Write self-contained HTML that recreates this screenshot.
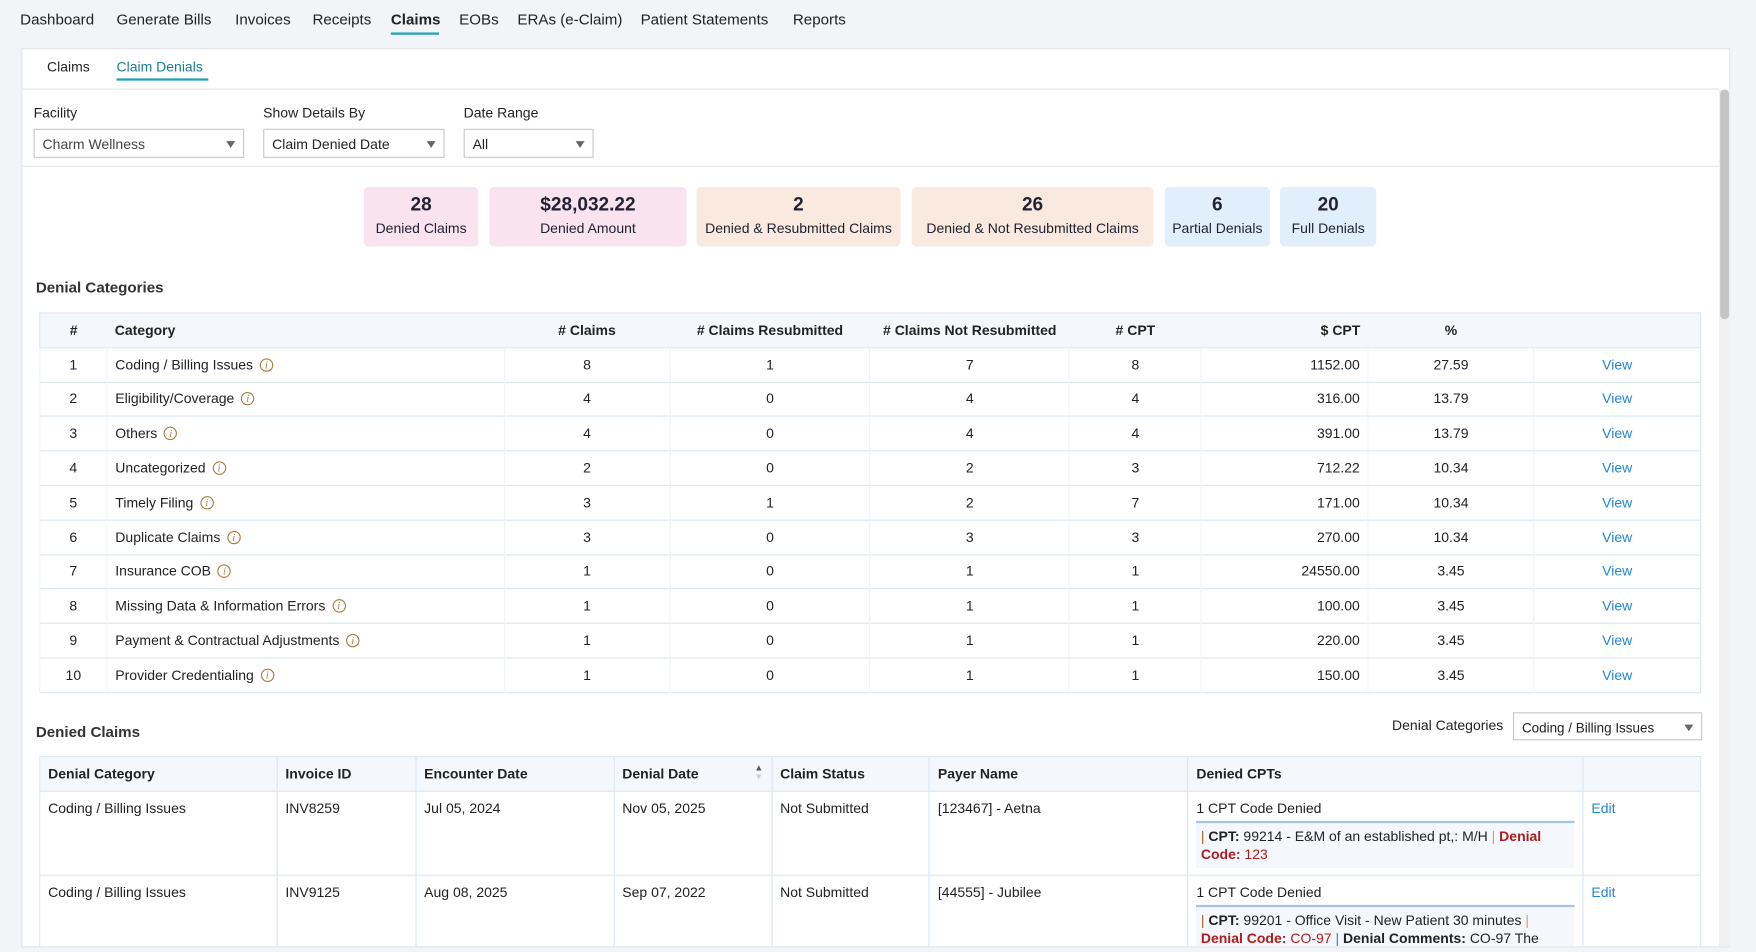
<!DOCTYPE html>
<html><head><meta charset="utf-8"><style>
*{box-sizing:border-box;margin:0;padding:0}
html,body{width:1756px;height:952px;overflow:hidden;background:#f3f4f8}
#s{position:absolute;left:0;top:0;width:1568px;height:850px;transform:scale(1.1199);transform-origin:0 0;font-family:"Liberation Sans",sans-serif;color:#222;font-size:12.5px}
.a{position:absolute;white-space:nowrap}
.nav{font-size:13.5px;top:10px}
.card{position:absolute;left:19px;top:43px;width:1526px;height:803px;background:#fff;border:1px solid #e1e3e8}
.sel{position:absolute;border:1px solid #c8c8c8;background:#fff;font-size:12.5px;padding:6px 7px;height:26px}
.sel:after{content:"";position:absolute;right:7px;top:10px;border:4.5px solid transparent;border-top:6px solid #666}
.k{position:absolute;top:167px;height:53px;border-radius:4px;text-align:center;color:#223}
.k b{display:block;font-size:17px;margin-top:6px;height:24px}
.k span{font-size:12.5px}
table{position:absolute;border-collapse:collapse;font-size:12.5px}
td,th{border-top:1px solid #dbe6f3;border-left:1px solid #f0f3f7;padding:0 7px;font-weight:normal}
th{font-weight:bold;background:#f4f8fd;border-left:none}
tr:first-child th{border-top:none}
.t1 td,.t1 th{height:30.8px}
.i{display:inline-block;width:12px;height:12px;border:1px solid #a57b3f;border-radius:50%;color:#a57b3f;font-size:9px;font-style:italic;text-align:center;line-height:11px;margin-left:6px;vertical-align:1px;font-family:"Liberation Serif",serif}
.v{color:#2486d6}
.t2 th{height:31px;text-align:left;border-left:1px solid #dbe6f3}
.t2 td{vertical-align:top;padding-top:8px;border-left:1px solid #dbe6f3}
.box{background:#f4f8fd;border-top:2px solid #a8c4e4;margin-top:4px;padding:4px 4px;line-height:16px}
.red{color:#b01c1c}.or{color:#e89a4a}
</style></head><body><div id="s">
<div class="a nav" style="left:18px">Dashboard</div>
<div class="a nav" style="left:104px">Generate Bills</div>
<div class="a nav" style="left:210px">Invoices</div>
<div class="a nav" style="left:279px">Receipts</div>
<div class="a nav" style="left:349px;font-weight:bold">Claims</div>
<div class="a" style="left:349px;top:29px;width:43px;height:2px;background:#1aa3b8"></div>
<div class="a nav" style="left:410px">EOBs</div>
<div class="a nav" style="left:462px">ERAs (e-Claim)</div>
<div class="a nav" style="left:572px">Patient Statements</div>
<div class="a nav" style="left:708px">Reports</div>
<div class="card"></div>
<div class="a" style="left:42px;top:53px">Claims</div>
<div class="a" style="left:104px;top:53px;color:#1a7e92">Claim Denials</div>
<div class="a" style="left:104px;top:70px;width:82px;height:2px;background:#1aa3b8"></div>
<div class="a" style="left:20px;top:79px;width:1515px;height:1px;background:#e3e6ea"></div>
<div class="a" style="left:30px;top:94px">Facility</div>
<div class="a" style="left:235px;top:94px">Show Details By</div>
<div class="a" style="left:414px;top:94px">Date Range</div>
<div class="sel" style="left:30px;top:115px;width:188px;color:#444">Charm Wellness</div>
<div class="sel" style="left:235px;top:115px;width:162px">Claim Denied Date</div>
<div class="sel" style="left:414px;top:115px;width:116px">All</div>
<div class="a" style="left:20px;top:148px;width:1515px;height:1px;background:#e3e6ea"></div>
<div class="a" style="left:1535px;top:80px;width:10px;height:765px;background:#f0f0f0"></div>
<div class="a" style="left:1536px;top:80px;width:8px;height:205px;background:#c4c4c4;border-radius:4px"></div>
<div class="k" style="left:325px;width:102px;background:#f8e3ef"><b>28</b><span>Denied Claims</span></div>
<div class="k" style="left:437px;width:176px;background:#f8e3ef"><b>$28,032.22</b><span>Denied Amount</span></div>
<div class="k" style="left:622px;width:182px;background:#f9e9de"><b>2</b><span>Denied &amp; Resubmitted Claims</span></div>
<div class="k" style="left:814px;width:216px;background:#f9e9de"><b>26</b><span>Denied &amp; Not Resubmitted Claims</span></div>
<div class="k" style="left:1040px;width:94px;background:#e0effb"><b>6</b><span>Partial Denials</span></div>
<div class="k" style="left:1143px;width:86px;background:#e0effb"><b>20</b><span>Full Denials</span></div>
<div class="a" style="left:32px;top:249px;font-size:13.5px;font-weight:bold;color:#333">Denial Categories</div>
<table class="t1" style="left:35px;top:279px;width:1484px;border:1px solid #dbe6f3">
<colgroup><col style="width:60px"><col style="width:355px"><col style="width:148px"><col style="width:179px"><col style="width:178px"><col style="width:118px"><col style="width:149px"><col style="width:148px"><col style="width:149px"></colgroup>
<tr><th>#</th><th style="text-align:left">Category</th><th>#&nbsp;Claims</th><th># Claims Resubmitted</th><th># Claims Not Resubmitted</th><th># CPT</th><th style="text-align:right">$ CPT</th><th>%</th><th></th></tr>
<tr><td align=center>1</td><td>Coding / Billing Issues<span class="i">i</span></td><td align=center>8</td><td align=center>1</td><td align=center>7</td><td align=center>8</td><td align=right>1152.00</td><td align=center>27.59</td><td align=center class="v">View</td></tr>
<tr><td align=center>2</td><td>Eligibility/Coverage<span class="i">i</span></td><td align=center>4</td><td align=center>0</td><td align=center>4</td><td align=center>4</td><td align=right>316.00</td><td align=center>13.79</td><td align=center class="v">View</td></tr>
<tr><td align=center>3</td><td>Others<span class="i">i</span></td><td align=center>4</td><td align=center>0</td><td align=center>4</td><td align=center>4</td><td align=right>391.00</td><td align=center>13.79</td><td align=center class="v">View</td></tr>
<tr><td align=center>4</td><td>Uncategorized<span class="i">i</span></td><td align=center>2</td><td align=center>0</td><td align=center>2</td><td align=center>3</td><td align=right>712.22</td><td align=center>10.34</td><td align=center class="v">View</td></tr>
<tr><td align=center>5</td><td>Timely Filing<span class="i">i</span></td><td align=center>3</td><td align=center>1</td><td align=center>2</td><td align=center>7</td><td align=right>171.00</td><td align=center>10.34</td><td align=center class="v">View</td></tr>
<tr><td align=center>6</td><td>Duplicate Claims<span class="i">i</span></td><td align=center>3</td><td align=center>0</td><td align=center>3</td><td align=center>3</td><td align=right>270.00</td><td align=center>10.34</td><td align=center class="v">View</td></tr>
<tr><td align=center>7</td><td>Insurance COB<span class="i">i</span></td><td align=center>1</td><td align=center>0</td><td align=center>1</td><td align=center>1</td><td align=right>24550.00</td><td align=center>3.45</td><td align=center class="v">View</td></tr>
<tr><td align=center>8</td><td>Missing Data &amp; Information Errors<span class="i">i</span></td><td align=center>1</td><td align=center>0</td><td align=center>1</td><td align=center>1</td><td align=right>100.00</td><td align=center>3.45</td><td align=center class="v">View</td></tr>
<tr><td align=center>9</td><td>Payment &amp; Contractual Adjustments<span class="i">i</span></td><td align=center>1</td><td align=center>0</td><td align=center>1</td><td align=center>1</td><td align=right>220.00</td><td align=center>3.45</td><td align=center class="v">View</td></tr>
<tr><td align=center>10</td><td>Provider Credentialing<span class="i">i</span></td><td align=center>1</td><td align=center>0</td><td align=center>1</td><td align=center>1</td><td align=right>150.00</td><td align=center>3.45</td><td align=center class="v">View</td></tr>
</table>
<div class="a" style="left:32px;top:646px;font-size:13.5px;font-weight:bold;color:#333">Denied Claims</div>
<div class="a" style="left:1243px;top:641px">Denial Categories</div>
<div class="sel" style="left:1351px;top:636px;width:169px;height:25px;font-size:12px">Coding / Billing Issues</div>
<div style="position:absolute;left:35px;top:675px;width:1485px;height:170px;overflow:hidden">
<table class="t2" style="left:0;top:0;width:1484px;border:1px solid #dbe6f3">
<colgroup><col style="width:212px"><col style="width:124px"><col style="width:177px"><col style="width:141px"><col style="width:141px"><col style="width:231px"><col style="width:353px"><col style="width:105px"></colgroup>
<tr><th>Denial Category</th><th>Invoice ID</th><th>Encounter Date</th><th>Denial Date<span style="float:right;font-size:8px;color:#556;line-height:8px;margin-top:-2px">▲<br><span style="color:#ccd">▼</span></span></th><th>Claim Status</th><th>Payer Name</th><th>Denied CPTs</th><th></th></tr>
<tr style="height:75px"><td>Coding / Billing Issues</td><td>INV8259</td><td>Jul 05, 2024</td><td>Nov 05, 2025</td><td>Not Submitted</td><td>[123467] - Aetna</td><td>1 CPT Code Denied<div class="box"><span style="color:#a85a1a">|</span> <b>CPT:</b> 99214 - E&amp;M of an established pt,: M/H <span class="or">|</span> <b class="red">Denial Code:</b> <span class="red">123</span></div></td><td class="v">Edit</td></tr>
<tr style="height:75px"><td>Coding / Billing Issues</td><td>INV9125</td><td>Aug 08, 2025</td><td>Sep 07, 2022</td><td>Not Submitted</td><td>[44555] - Jubilee</td><td>1 CPT Code Denied<div class="box"><span style="color:#a85a1a">|</span> <b>CPT:</b> 99201 - Office Visit - New Patient 30 minutes <span class="or">|</span> <b class="red">Denial Code:</b> <span class="red">CO-97</span> <span style="color:#2486d6">|</span> <b>Denial Comments:</b> CO-97 The</div></td><td class="v">Edit</td></tr>
</table></div>
</div></body></html>
